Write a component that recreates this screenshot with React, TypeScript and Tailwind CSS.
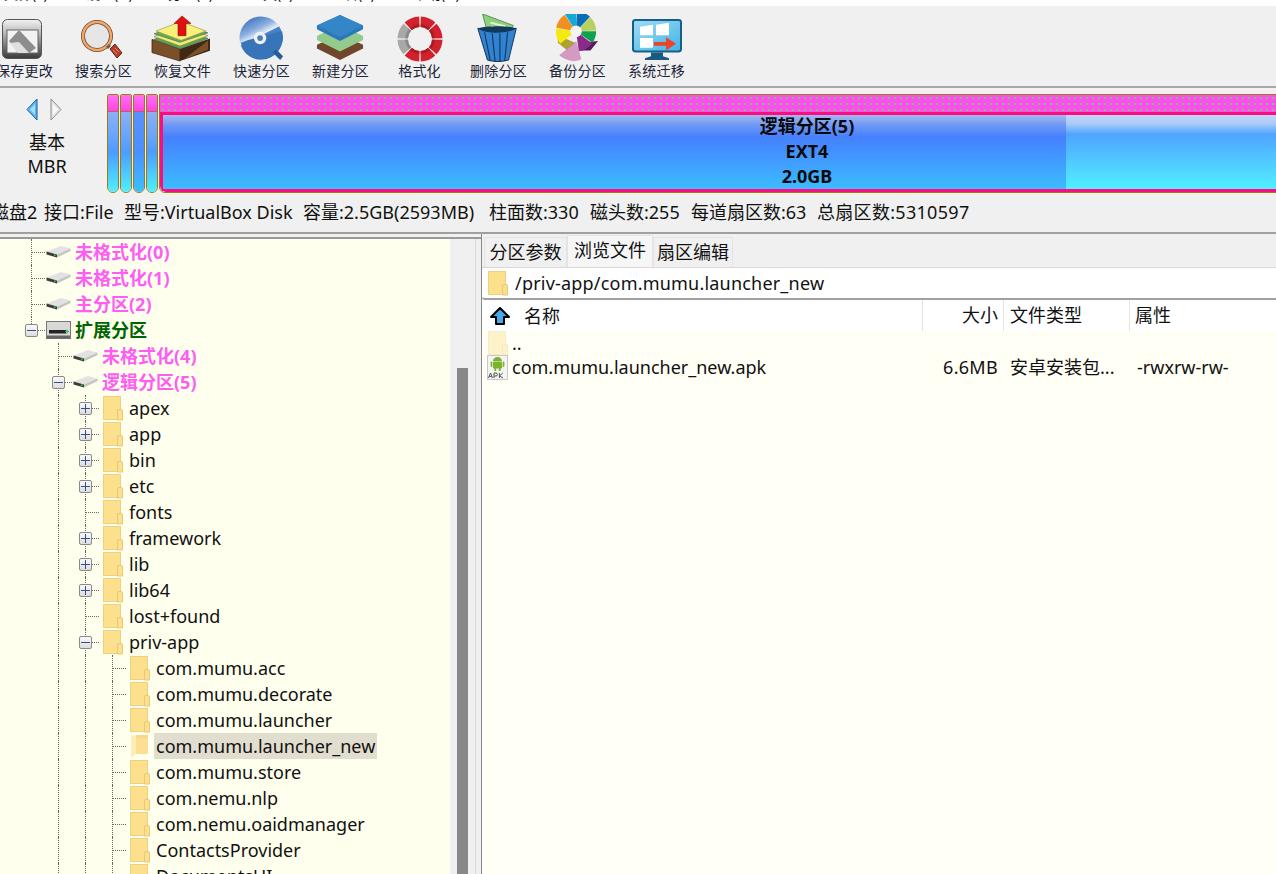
import React from "react";

const arc = (cx: number, cy: number, r0: number, r1: number, a0: number, a1: number) => {
  const p = (r: number, a: number) => {
    const t = ((a - 90) * Math.PI) / 180;
    return `${(cx + r * Math.cos(t)).toFixed(2)} ${(cy + r * Math.sin(t)).toFixed(2)}`;
  };
  const large = a1 - a0 > 180 ? 1 : 0;
  return `M${p(r1, a0)} A${r1} ${r1} 0 ${large} 1 ${p(r1, a1)} L${p(r0, a1)} A${r0} ${r0} 0 ${large} 0 ${p(r0, a0)} Z`;
};

const SaveIcon = () => (
  <svg width="44" height="44" viewBox="0 0 44 44">
    <defs>
      <linearGradient id="sv1" x1="0" y1="0" x2="0" y2="1">
        <stop offset="0" stopColor="#f4f4f4" />
        <stop offset="0.3" stopColor="#c0c0c0" />
        <stop offset="1" stopColor="#3a3a3a" />
      </linearGradient>
    </defs>
    <rect x="2.5" y="2.5" width="39" height="39" rx="5" fill="url(#sv1)" stroke="#555" />
    <rect x="7" y="13" width="31" height="23" fill="#f2f2f2" stroke="#666" />
    <path d="M9 24 L19 13 L36 31 L29 36 L18 36 Z" fill="#8d8d8d" />
    <path d="M19 25 L29 36 L18 36 L9 26 Z" fill="#e8e8e8" opacity="0.9" />
  </svg>
);
const SearchIcon = () => (
  <svg width="44" height="44" viewBox="0 0 44 44">
    <circle cx="18" cy="18" r="14" fill="#e6e6e6" stroke="#6b4a34" strokeWidth="4" />
    <circle cx="18" cy="18" r="14" fill="none" stroke="#f4a868" strokeWidth="2.4" />
    <path d="M28 30 L31 27" stroke="#7a5a44" strokeWidth="3" />
    <path d="M31 31 L36 26 L43 35 L38 40 Z" fill="#b83c24" stroke="#5c2c20" strokeWidth="1" />
    <path d="M34 32 L38 36 M36 30 L40 34" stroke="#e8906c" strokeWidth="1" />
  </svg>
);
const RestoreIcon = () => (
  <svg width="62" height="47" viewBox="0 0 62 50" preserveAspectRatio="none">
    <path d="M2 26 L30 36 L30 49 L2 40 Z" fill="#7b5028" stroke="#3a2410" strokeWidth="0.8" />
    <path d="M30 36 L60 25 L60 38 L30 49 Z" fill="#3e2a14" />
    <path d="M34 47 L58 27 L58 37 Z" fill="#7b5028" />
    <path d="M4 26 L31 14 L58 25 L30 36 Z" fill="#5aa64c" stroke="#555" strokeWidth="0.6" />
    <path d="M4 23 L31 12 L58 22 L30 33 Z" fill="#f0ec78" stroke="#7a7a40" strokeWidth="0.6" />
    <path d="M4 20 L31 10 L58 19 L30 29 Z" fill="#63ad52" stroke="#555" strokeWidth="0.6" />
    <path d="M6 17 L31 7 L56 17 L31 27 Z" fill="#f8f078" stroke="#8a8a40" strokeWidth="0.6" />
    <path d="M32 1 L41 9 L36 9 L36 22 L28 22 L28 9 L24 9 Z" fill="#e01010" stroke="#7a1010" strokeWidth="0.6" />
  </svg>
);
const QuickIcon = () => (
  <svg width="48" height="46" viewBox="0 0 50 48">
    <defs>
      <linearGradient id="qk1" x1="0.1" y1="0" x2="0.6" y2="1">
        <stop offset="0" stopColor="#2c62b4" />
        <stop offset="0.35" stopColor="#8cb0e0" />
        <stop offset="0.5" stopColor="#e8f0fa" />
        <stop offset="0.52" stopColor="#4a86c8" />
        <stop offset="1" stopColor="#1e5ea0" />
      </linearGradient>
    </defs>
    <circle cx="24" cy="23" r="22.5" fill="url(#qk1)" />
    <path d="M3 28 C15 23 30 20 46 16 L47 23 C46 35 36 45 24 45 C13 45 5 38 3 28 Z" fill="#3775b8" />
    <path d="M36 38 L44 46 L47 42 L40 35 Z" fill="#235f9c" />
    <circle cx="23" cy="23" r="6.5" fill="#f0f0f0" />
    <circle cx="23" cy="23" r="3" fill="#4d80bb" />
  </svg>
);
const NewIcon = () => (
  <svg width="48" height="48" viewBox="0 0 50 48">
    <path d="M1 31 L25 20 L49 31 L49 35 L25 47 L1 35 Z" fill="#70472a" />
    <path d="M1 22 L25 10 L49 22 L49 26 L25 38 L1 26 Z" fill="#92cb8b" />
    <path d="M1 11 L25 0 L49 11 L49 15 L25 27 L1 15 Z" fill="#2b78bb" />
    <path d="M1 11 L25 0 L49 11 L25 23 Z" fill="#3486c8" />
  </svg>
);
const FormatIcon = () => {
  const cols = ["#d2202c", "#d2202c", "#d2202c", "#d2202c", "#d2202c", "#a8a8a8", "#a8a8a8", "#d2202c"];
  return (
    <svg width="46" height="46" viewBox="0 0 48 48">
      {cols.map((c, i) => (
        <path key={i} d={arc(24, 24, 12.5, 23.5, i * 45 + 2, i * 45 + 43)} fill={c} />
      ))}
      {cols.map((_, i) => (
        <path key={i} d={arc(24, 24, 12.5, 15.5, i * 45 + 2, i * 45 + 43)} fill="#000" opacity="0.18" />
      ))}
    </svg>
  );
};
const BinIcon = () => (
  <svg width="44" height="48" viewBox="0 0 44 50">
    <path d="M8 8 L6 0 L38 12 L30 24 L12 22 Z" fill="#8fd07c" stroke="#3e7d3e" strokeWidth="0.8" />
    <path d="M14 9 L30 13 M15 13 L30 17 M16 17 L28 20" stroke="#e8f5d8" strokeWidth="2" />
    <path d="M1 15 L41 15 L33 48 C26 50 18 50 11 48 Z" fill="#3282d2" stroke="#10304f" strokeWidth="1" />
    <path d="M1 15 C10 21 32 21 41 15 C34 12 10 12 1 15 Z" fill="#123a5c" />
    <path d="M8 19 L14 49 M16 20 L19 50 M24 20 L24 50 M32 19 L29 49" stroke="#123a5c" strokeWidth="1.2" fill="none" />
  </svg>
);
const BackupIcon = () => {
  const segs: [string, number, number][] = [
    ["#0a6eb4", 2, 44],
    ["#b8d060", 46, 88],
    ["#0fa050", 90, 125],
    ["#8a2a8a", 127, 172],
    ["#f4ea10", 232, 278],
    ["#f09020", 280, 325],
    ["#12a8d8", 327, 360],
  ];
  return (
    <svg width="46" height="48" viewBox="0 0 48 50">
      <path d="M4 22 L4 30 L14 38 L22 30 Z" fill="#b0a030" />
      <path d="M27 30 L28 38 L38 38 L46 28 Z" fill="#5a1a5a" />
      {segs.map(([c, a, b], i) => (
        <path key={i} d={arc(23, 18, 6, 21, a, b)} fill={c} />
      ))}
      <circle cx="23" cy="18" r="5.5" fill="#f4f4f4" />
      <path d="M23 29 L28 47 C22 50 14 49 6 43 Z" fill="#d49ac4" stroke="#b080a8" strokeWidth="0.5" />
    </svg>
  );
};
const MigrateIcon = () => (
  <svg width="50" height="42" viewBox="0 0 50 44" preserveAspectRatio="none">
    <defs>
      <linearGradient id="mg1" x1="0" y1="0" x2="1" y2="1">
        <stop offset="0" stopColor="#9fdcf4" />
        <stop offset="1" stopColor="#44b4e6" />
      </linearGradient>
    </defs>
    <rect x="1" y="1" width="48" height="33" rx="2.5" fill="url(#mg1)" stroke="#14608a" strokeWidth="2" />
    <path d="M19 35 L31 35 L31 39 L37 41 L37 43 L13 43 L13 41 L19 39 Z" fill="#1a5a80" />
    <path d="M8 8 L21 6 L21 17 L8 17 Z M24 6 L37 4 L37 17 L24 17 Z M8 20 L21 20 L21 30 L8 30 Z" fill="#fff" />
    <path d="M22 24 L34 24 L34 19 L44 26 L34 33 L34 28 L22 28 Z" fill="#e8452a" />
  </svg>
);

const tools: [string, React.ReactNode, string][] = [
  ["保存更改", <SaveIcon />, "-translate-x-[3px] pb-[1px]"],
  ["搜索分区", <SearchIcon />, "-translate-x-[3px]"],
  ["恢复文件", <RestoreIcon />, "-translate-x-[2px]"],
  ["快速分区", <QuickIcon />, ""],
  ["新建分区", <NewIcon />, "-translate-x-[1px]"],
  ["格式化", <FormatIcon />, ""],
  ["删除分区", <BinIcon />, "-translate-x-[1px]"],
  ["备份分区", <BackupIcon />, "-translate-x-[1px]"],
  ["系统迁移", <MigrateIcon />, "pb-[1px]"],
];

const Folder = ({ faint = false }: { faint?: boolean }) => (
  <svg width="20" height="25" viewBox="0 0 20 25" className={faint ? "opacity-40" : ""}>
    <rect x="0.5" y="0.5" width="17" height="23" fill="#fde08c" stroke="#eed084" />
    <path d="M14.5 24 L14.5 15 Q14.5 13.5 16 13.5 L18 13.5 Q19.5 13.5 19.5 15 L19.5 24 Z" fill="#fde08c" stroke="#e8c878" />
  </svg>
);
const OpenFolder = () => (
  <svg width="20" height="25" viewBox="0 0 20 25">
    <path d="M6 1 L18 1 L18 20 L6 20 Z" fill="#f8d888" />
    <path d="M1 2 L6 1 L6 20 L1 24 Z" fill="#fdeeb8" />
    <path d="M6 4 L18 4 L18 20 L6 20 Z" fill="#fbdf92" />
  </svg>
);
const Drive = () => (
  <svg width="25" height="14" viewBox="0 0 25 14">
    <path d="M0.5 6.5 L15 1 L24.5 3.5 L11 9.5 Z" fill="#e2e2e2" />
    <path d="M11 9.5 L24.5 3.5 L24.5 6 L11 12.5 Z" fill="#c4c4c4" />
    <path d="M0.5 6.5 L11 9.5 L11 12.5 L0.5 9.5 Z" fill="#3c3c3c" />
    <rect x="8" y="9.4" width="1.6" height="1.6" fill="#30c040" />
  </svg>
);
const ExtDrive = () => (
  <svg width="25" height="19" viewBox="0 0 25 19">
    <rect x="0.5" y="0.5" width="24" height="17" fill="#d8d8d8" stroke="#777" />
    <rect x="1" y="14.5" width="23" height="3" fill="#666" />
    <rect x="3" y="9" width="17" height="3.5" fill="#222" />
    <path d="M19 10.5 H23 M21 8.5 V12.5" stroke="#2ec44a" strokeWidth="1.2" />
  </svg>
);
const ExpandBox = ({ open }: { open: boolean }) => (
  <span className="relative z-10 flex h-[13px] w-[13px] items-center justify-center rounded-[2px] border border-[#8a8a8a] bg-gradient-to-b from-[#fafafa] to-[#dcdcdc]">
    <span className="absolute h-px w-[9px] bg-[#35508c]" />
    {!open && <span className="absolute h-[9px] w-px bg-[#35508c]" />}
  </span>
);

type Row = {
  label: string;
  level: number;
  kind: "drive" | "ext" | "folder" | "open";
  box?: "open" | "closed";
  tone?: "pink" | "green";
  sel?: boolean;
};
const rows: Row[] = [
  { label: "未格式化(0)", level: 1, kind: "drive", tone: "pink" },
  { label: "未格式化(1)", level: 1, kind: "drive", tone: "pink" },
  { label: "主分区(2)", level: 1, kind: "drive", tone: "pink" },
  { label: "扩展分区", level: 1, kind: "ext", tone: "green", box: "open" },
  { label: "未格式化(4)", level: 2, kind: "drive", tone: "pink" },
  { label: "逻辑分区(5)", level: 2, kind: "drive", tone: "pink", box: "open" },
  { label: "apex", level: 3, kind: "folder", box: "closed" },
  { label: "app", level: 3, kind: "folder", box: "closed" },
  { label: "bin", level: 3, kind: "folder", box: "closed" },
  { label: "etc", level: 3, kind: "folder", box: "closed" },
  { label: "fonts", level: 3, kind: "folder" },
  { label: "framework", level: 3, kind: "folder", box: "closed" },
  { label: "lib", level: 3, kind: "folder", box: "closed" },
  { label: "lib64", level: 3, kind: "folder", box: "closed" },
  { label: "lost+found", level: 3, kind: "folder" },
  { label: "priv-app", level: 3, kind: "folder", box: "open" },
  { label: "com.mumu.acc", level: 4, kind: "folder" },
  { label: "com.mumu.decorate", level: 4, kind: "folder" },
  { label: "com.mumu.launcher", level: 4, kind: "folder" },
  { label: "com.mumu.launcher_new", level: 4, kind: "open", sel: true },
  { label: "com.mumu.store", level: 4, kind: "folder" },
  { label: "com.nemu.nlp", level: 4, kind: "folder" },
  { label: "com.nemu.oaidmanager", level: 4, kind: "folder" },
  { label: "ContactsProvider", level: 4, kind: "folder" },
  { label: "DocumentsUI", level: 4, kind: "folder" },
];

const Pass = () => (
  <div className="relative h-full w-[27px] shrink-0">
    <span className="absolute left-[13px] top-0 h-full border-l border-dotted border-[#666]" />
  </div>
);
const Conn = ({ row }: { row: Row }) => (
  <div className="relative flex h-full w-[27px] shrink-0 items-center justify-center">
    <span
      className={
        row.label === "扩展分区"
          ? "absolute left-[13px] top-0 h-1/2 border-l border-dotted border-[#666]"
          : "absolute left-[13px] top-0 h-full border-l border-dotted border-[#666]"
      }
    />
    <span className="absolute left-[13px] right-0 top-[13px] border-t border-dotted border-[#666]" />
    {row.box && <ExpandBox open={row.box === "open"} />}
  </div>
);

const TreeRow = ({ row }: { row: Row }) => (
  <div className="flex h-[26px] shrink-0 items-center pl-[18px]">
    {row.level > 1 && <div className="h-full w-[27px] shrink-0" />}
    {row.level > 2 && <Pass />}
    {row.level > 3 && <Pass />}
    <Conn row={row} />
    <div className={`flex h-full w-[30px] shrink-0 items-center ${row.kind === "folder" || row.kind === "open" ? "pl-[4px]" : "pl-[1px]"}`}>
      {row.kind === "drive" && <Drive />}
      {row.kind === "ext" && <ExtDrive />}
      {row.kind === "folder" && <Folder />}
      {row.kind === "open" && <OpenFolder />}
    </div>
    <span
      className={`whitespace-nowrap text-[18px] leading-[26px] ${
        row.tone === "pink"
          ? "font-bold text-[#ff5cf4]"
          : row.tone === "green"
            ? "font-bold text-[#006400]"
            : "text-[#111]"
      } ${row.sel ? "-ml-[2px] bg-[#e2decf] px-[2px]" : ""}`}
    >
      {row.label}
    </span>
  </div>
);

const Pillar = ({ dark = false }: { dark?: boolean }) => (
  <div className="flex h-[99px] w-[12px] flex-col overflow-hidden rounded-b-[6px] rounded-t-[2px] border border-[#9a7c10]">
    <div className="h-[17px] shrink-0 border-b border-[#b06a50] bg-gradient-to-b from-[#ff70f4] to-[#ff40e8]" />
    <div
      className={`flex-1 ${
        dark
          ? "bg-gradient-to-b from-[#5a90ff] via-[#4a90ff] to-[#38c0ff]"
          : "bg-gradient-to-b from-[#8cb0f4] via-[#4c9cff] to-[#50f0ff]"
      }`}
    />
  </div>
);

const Apk = () => (
  <svg width="21" height="25" viewBox="0 0 21 25">
    <rect x="0.5" y="0.5" width="20" height="24" fill="#f4f4f4" stroke="#c8c8c8" />
    <path d="M6 6 A4.5 4 0 0 1 15 6 Z" fill="#7cb32c" />
    <rect x="6" y="6.6" width="9" height="7" rx="1" fill="#7cb32c" />
    <rect x="3.6" y="6.6" width="1.7" height="5.4" rx="0.8" fill="#7cb32c" />
    <rect x="15.7" y="6.6" width="1.7" height="5.4" rx="0.8" fill="#7cb32c" />
    <rect x="7.4" y="13" width="1.8" height="3" fill="#7cb32c" />
    <rect x="11.8" y="13" width="1.8" height="3" fill="#7cb32c" />
    <path d="M1.5 23 L3.5 18 L5.5 23 M2.3 21.4 H4.7 M7 23 V18 H9 Q10.4 18 10.4 19.5 Q10.4 21 9 21 H7 M12.4 18 V23 M15.8 18 L12.6 20.8 L16 23" stroke="#555" strokeWidth="1" fill="none" />
  </svg>
);

export default function App() {
  return (
    <div className="flex h-[874px] w-[1276px] flex-col overflow-hidden bg-[#f0f0f0] font-['Noto_Sans','Noto_Sans_CJK_SC',sans-serif] text-[#111]">
      {/* clipped menu bar */}
      <div className="h-[6px] shrink-0 overflow-hidden bg-white">
        <div className="-mt-[19px] flex h-[25px] items-center text-[14px] leading-[25px] text-[#111]">
          <span className="ml-[4px] w-[82px]">文件(F)</span>
          <span className="w-[82px]">硬盘(D)</span>
          <span className="w-[81px]">分区(P)</span>
          <span className="w-[81px]">工具(T)</span>
          <span className="w-[83px]">查看(V)</span>
          <span>帮助(H)</span>
        </div>
      </div>

      {/* toolbar */}
      <div className="flex h-[82px] shrink-0 border-b-2 border-[#a8a8a8]">
        <div className="-ml-[15px] flex">
          {tools.map(([label, icon, cls]) => (
            <div key={label} className="flex w-[79px] flex-col items-center">
              <div className={`flex h-[56px] items-end justify-center ${cls}`}>{icon}</div>
              <span className="mt-[1px] whitespace-nowrap text-[14px] leading-[16px] tracking-[0.2px] text-[#1c2438]">
                {label}
              </span>
            </div>
          ))}
        </div>
      </div>

      {/* disk bar */}
      <div className="flex h-[108px] shrink-0 overflow-hidden">
        <div className="flex w-[107px] shrink-0 flex-col items-center pr-[13px] pt-[10px]">
          <div className="-ml-[6px] flex h-[24px] gap-[12px]">
            <svg width="12" height="23" viewBox="0 0 12 23">
              <path d="M11 1 L1 11.5 L11 22 L11 1 Z" fill="#5cb8f4" stroke="#1c5cb0" strokeWidth="1" />
              <path d="M9 6 L4 11.5 L9 17 Z" fill="#a6defc" />
            </svg>
            <svg width="12" height="23" viewBox="0 0 12 23">
              <path d="M1 1 L11 11.5 L1 22 L1 1 Z" fill="#e6e6e6" stroke="#8c8c8c" strokeWidth="1" />
              <path d="M3 6 L8 11.5 L3 17 Z" fill="#f8f8f8" />
            </svg>
          </div>
          <div className="mt-[8px] text-center text-[18px] leading-[24px] text-[#111]">
            <div>基本</div>
            <div>MBR</div>
          </div>
        </div>
        <div className="flex gap-px pt-[6px]">
          <Pillar />
          <Pillar />
          <Pillar dark />
          <Pillar />
          <div className="relative flex h-[99px] w-[1296px] shrink-0 flex-col overflow-hidden rounded-b-[6px] border border-[#9a7c10]">
            <div className="h-[17px] shrink-0 bg-[#ff4cf0] bg-[radial-gradient(circle,#50e050_0.7px,transparent_0.9px)] bg-[length:6px_6px]" />
            <div className="flex flex-1 rounded-bl-[6px] border-[3px] border-r-0 border-[#ff0a80]">
              <div className="h-full w-[903px] bg-[linear-gradient(180deg,#a4b8ee_0%,#6e98f4_14%,#4580ff_30%,#3cbcff_100%)]" />
              <div className="h-full flex-1 bg-[linear-gradient(180deg,#c4d6f8_0%,#a8caf8_12%,#50a4ff_26%,#50f0ff_100%)]" />
            </div>
            <div className="absolute inset-x-0 top-[19px] text-center text-[18px] font-bold leading-[25px] text-[#0a0a0a]">
              <div>逻辑分区(5)</div>
              <div>EXT4</div>
              <div>2.0GB</div>
            </div>
          </div>
        </div>
      </div>

      {/* disk info */}
      <div className="flex h-[38px] shrink-0 items-center whitespace-nowrap border-b-2 border-[#a0a0a0] pb-[3px] text-[18px] leading-[33px]">
        <span className="-ml-[9px] w-[53px] shrink-0">磁盘2</span>
        <span className="w-[80px] shrink-0">接口:File</span>
        <span className="w-[179px] shrink-0">型号:VirtualBox Disk</span>
        <span className="w-[186px] shrink-0">容量:2.5GB(2593MB)</span>
        <span className="w-[101px] shrink-0">柱面数:330</span>
        <span className="w-[101px] shrink-0">磁头数:255</span>
        <span className="w-[126px] shrink-0">每道扇区数:63</span>
        <span className="shrink-0 tracking-[0.3px]">总扇区数:5310597</span>
      </div>

      {/* main */}
      <div className="flex min-h-0 flex-1">
        {/* tree */}
        <div className="flex w-[482px] shrink-0 flex-col border-r border-[#888] pt-[3px]">
          <div className="flex min-h-0 flex-1 border-t-2 border-[#9a9a9a]">
            <div className="flex w-[450px] shrink-0 flex-col overflow-hidden bg-[#ffffee]">
              {rows.map((r) => (
                <TreeRow key={r.label} row={r} />
              ))}
            </div>
            <div className="w-[25px] shrink-0 pl-[7px] pt-[129px]">
              <div className="h-full w-[11px] bg-[#888]" />
            </div>
            <div className="w-[1px] bg-[#d8d8d8]" />
          </div>
        </div>

        {/* right */}
        <div className="flex min-w-0 flex-1 flex-col">
          <div className="flex h-[34px] shrink-0 items-end border-b border-[#d8d8d8] pl-[2px] text-[18px]">
            <div className="flex h-[30px] w-[83px] items-center justify-center border border-b-0 border-[#e4e4e4] pb-[1px] leading-[28px]">分区参数</div>
            <div className="flex h-[32px] w-[86px] items-start justify-center border border-b-0 border-[#e4e4e4] bg-[#f6f6f6] leading-[28px]">浏览文件</div>
            <div className="flex h-[30px] w-[80px] items-center justify-center border border-b-0 border-[#e4e4e4] pb-[1px] leading-[28px]">扇区编辑</div>
          </div>
          <div className="flex h-[32px] shrink-0 items-center rounded-l-[3px] border-b-2 border-[#a0a0a0] bg-white pl-[6px] text-[18px]">
            <Folder />
            <span className="ml-[7px] tracking-[0.2px]">/priv-app/com.mumu.launcher_new</span>
          </div>
          <div className="flex h-[31px] shrink-0 items-center bg-white text-[18px] leading-[30px]">
            <div className="flex h-full w-[441px] items-center border-r border-[#e4e4e4] pl-[8px]">
              <svg width="20" height="18" viewBox="0 0 20 18">
                <path d="M10 1 L19 10 L14 10 L14 17 L6 17 L6 10 L1 10 Z" fill="#48a8e8" stroke="#000" strokeWidth="2" strokeLinejoin="round" />
              </svg>
              <span className="ml-[14px]">名称</span>
            </div>
            <div className="h-full w-[81px] border-r border-[#e4e4e4] pr-[5px] text-right">大小</div>
            <div className="h-full w-[126px] border-r border-[#e4e4e4] pl-[6px]">文件类型</div>
            <div className="h-full flex-1 pl-[5px]">属性</div>
          </div>
          <div className="flex-1 bg-[#fffff5] text-[18px]">
            <div className="flex h-[24px] items-center pl-[6px]">
              <Folder faint />
              <span className="ml-[4px] leading-[24px]">..</span>
            </div>
            <div className="flex h-[25px] items-center leading-[25px]">
              <div className="flex w-[441px] items-center pl-[5px]">
                <Apk />
                <span className="ml-[4px]">com.mumu.launcher_new.apk</span>
              </div>
              <div className="w-[81px] pr-[6px] text-right tracking-[0.3px]">6.6MB</div>
              <div className="w-[126px] whitespace-nowrap pl-[6px]">安卓安装包...</div>
              <div className="pl-[7px]">-rwxrw-rw-</div>
            </div>
          </div>
        </div>
      </div>
    </div>
  );
}
